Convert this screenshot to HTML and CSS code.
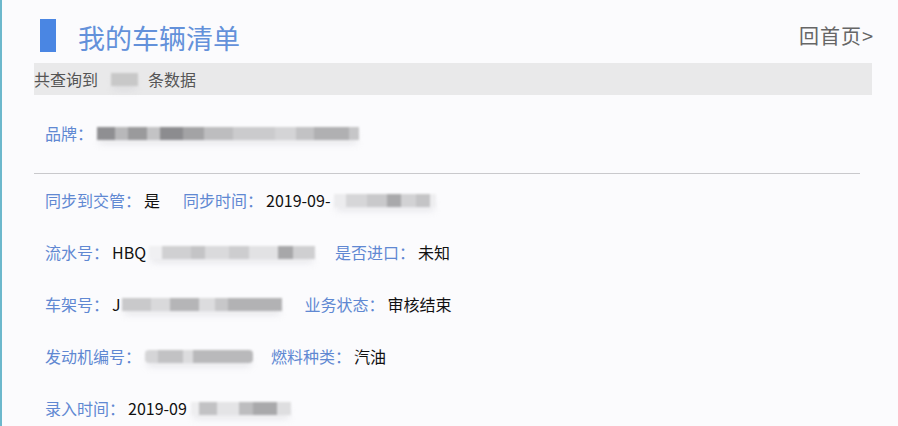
FILE: index.html
```html
<!DOCTYPE html>
<html lang="zh-CN">
<head>
<meta charset="utf-8">
<title>我的车辆清单</title>
<link rel="stylesheet" href="styles.css">
</head>
<body>
<div class="page">
  <header class="head">
    <span class="mark"></span>
    <h1 class="title">我的车辆清单</h1>
    <a class="home" href="#">回首页&gt;</a>
  </header>
  <div class="summary">共查询到<span class="mosaic m-count"></span>条数据</div>

  <div class="row brand">
    <span class="lbl">品牌：</span><span class="mosaic m-brand"></span>
  </div>
  <hr class="divider">

  <div class="row">
    <span class="item"><span class="lbl">同步到交管：</span><span class="val">是</span></span>
    <span class="item second s1"><span class="lbl">同步时间：</span><span class="val">2019-09-</span><span class="mosaic m-sync"></span></span>
  </div>
  <div class="row">
    <span class="item"><span class="lbl">流水号：</span><span class="val">HBQ</span><span class="mosaic m-serial"></span></span>
    <span class="item second s2"><span class="lbl">是否进口：</span><span class="val">未知</span></span>
  </div>
  <div class="row">
    <span class="item"><span class="lbl">车架号：</span><span class="val">J</span><span class="mosaic m-vin"></span></span>
    <span class="item second s3"><span class="lbl">业务状态：</span><span class="val">审核结束</span></span>
  </div>
  <div class="row">
    <span class="item"><span class="lbl">发动机编号：</span><span class="mosaic m-engine"></span></span>
    <span class="item second s4"><span class="lbl">燃料种类：</span><span class="val">汽油</span></span>
  </div>
  <div class="row">
    <span class="item"><span class="lbl">录入时间：</span><span class="val">2019-09</span><span class="mosaic m-entry"></span></span>
  </div>
</div>
</body>
</html>
```

FILE: styles.css
```css
html, body {
  margin: 0;
  padding: 0;
  background: #fbfbfd;
}
body {
  font-family: "Noto Sans CJK SC", "Liberation Sans", sans-serif;
  overflow: hidden;
}
.page {
  height: 426px;
  border-left: 2px solid #6cb8cc;
  box-sizing: border-box;
}
.head {
  display: flex;
  align-items: center;
  height: 63px;
  padding: 8px 24px 0 38px;
  box-sizing: border-box;
}
.mark {
  width: 16px;
  height: 33px;
  background: #4a86e3;
  flex: none;
}
.title {
  margin: 4px 0 0 22px;
  font-size: 27px;
  font-weight: normal;
  color: #6391da;
  line-height: 1;
  flex: 1;
}
.home {
  font-size: 20px;
  color: #666;
  text-decoration: none;
  line-height: 1;
  letter-spacing: 1px;
  margin-top: 1px;
}
.summary {
  margin-left: 32px;
  width: 838px;
  height: 32px;
  background: #e9e9ea;
  font-size: 16px;
  line-height: 32px;
  color: #555;
  display: flex;
  align-items: center;
}
.mosaic {
  display: inline-block;
  height: 13px;
  filter: blur(0.8px);
  box-shadow: 0 6px 6px -2px rgba(200, 200, 205, 0.35);
}
.m-count {
  width: 27px;
  margin: 0 10px 0 13px;
  background: #c8c8c8;
}
.row {
  display: flex;
  align-items: center;
  height: 52px;
  padding-left: 43px;
  font-size: 16px;
}
.brand {
  margin-top: 12px;
}
.item {
  display: flex;
  align-items: center;
}
.lbl {
  color: #6088d2;
  margin-right: 3px;
}
.val {
  color: #111;
}
.divider {
  margin: 14px 0 0 32px;
  width: 826px;
  border: 0;
  border-top: 1px solid #c9c9cc;
  height: 0;
}
.m-brand {
  width: 262px;
  margin-left: 1px;
  background: linear-gradient(90deg,
    #8f8f92 0 7%, #b8b8ba 7% 12%, #9a9a9c 12% 19%, #c3c3c5 19% 24%,
    #8c8c8f 24% 33%, #a3a3a5 33% 41%, #bdbdbf 41% 52%, #cbcbcd 52% 68%,
    #d4d4d6 68% 76%, #c2c2c4 76% 83%, #b0b0b2 83% 96%, #c6c6c8 96% 100%);
}
.m-sync {
  width: 102px;
  margin-left: 4px;
  background: linear-gradient(90deg,
    #ececee 0 12%, #d6d6d8 12% 32%, #c9c9cb 32% 52%, #a9a9ab 52% 66%,
    #d2d2d4 66% 80%, #c4c4c6 80% 94%, #eeeef0 94% 100%);
}
.m-serial {
  width: 166px;
  margin-left: 3px;
  background: linear-gradient(90deg,
    #f0f0f2 0 8%, #d0d0d2 8% 25%, #c4c4c6 25% 34%, #dadadc 34% 48%,
    #cdcdcf 48% 60%, #e2e2e4 60% 78%, #a7a7a9 78% 87%, #cfcfd1 87% 100%);
}
.m-vin {
  width: 160px;
  margin-left: 1px;
  background: linear-gradient(90deg,
    #c9c9cb 0 18%, #d9d9db 18% 30%, #b5b5b7 30% 48%, #dcdcde 48% 58%,
    #c7c7c9 58% 66%, #b2b2b4 66% 100%);
}
.m-engine {
  width: 108px;
  margin-left: 1px;
  border-radius: 4px;
  background: linear-gradient(90deg,
    #d5d5d7 0 12%, #c2c2c4 12% 35%, #dcdcde 35% 44%, #b9b9bb 44% 100%);
}
.m-entry {
  width: 100px;
  margin-left: 4px;
  background: linear-gradient(90deg,
    #eeeef0 0 8%, #c2c2c4 8% 26%, #e4e4e6 26% 48%, #bdbdbf 48% 62%,
    #a9a9ab 62% 86%, #dedee0 86% 100%);
}
.s1 { margin-left: 23px; }
.s2 { margin-left: 20px; }
.s3 { margin-left: 23px; }
.s4 { margin-left: 18px; }
```
